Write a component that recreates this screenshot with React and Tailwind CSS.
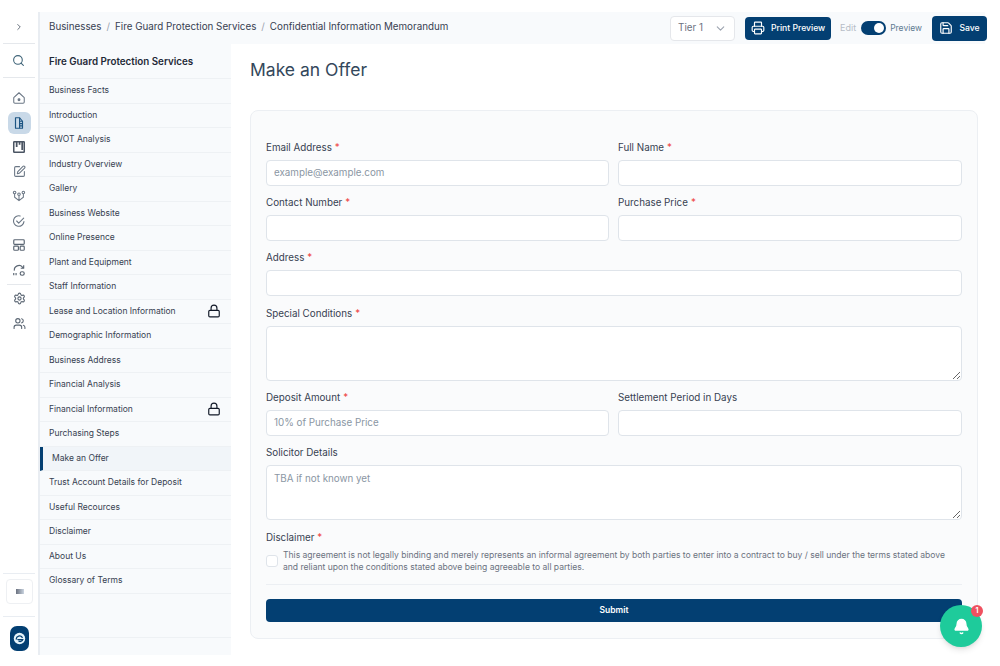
import { Bell, ChevronDown, ChevronRight, Lock, Printer, Save, Search, Settings, SquarePen, Users } from 'lucide-react';

const menuItems = [
    { name: 'Business Facts' },
    { name: 'Introduction' },
    { name: 'SWOT Analysis' },
    { name: 'Industry Overview' },
    { name: 'Gallery' },
    { name: 'Business Website' },
    { name: 'Online Presence' },
    { name: 'Plant and Equipment' },
    { name: 'Staff Information' },
    { name: 'Lease and Location Information', locked: true },
    { name: 'Demographic Information' },
    { name: 'Business Address' },
    { name: 'Financial Analysis' },
    { name: 'Financial Information', locked: true },
    { name: 'Purchasing Steps' },
    { name: 'Make an Offer', active: true },
    { name: 'Trust Account Details for Deposit' },
    { name: 'Useful Recources' },
    { name: 'Disclaimer' },
    { name: 'About Us' },
    { name: 'Glossary of Terms' },
];

function HomeIcon() {
    return (
        <svg className="w-[14px] h-[14px]" viewBox="0 0 24 24" fill="none" stroke="#6b7785" strokeWidth="1.8">
            <path d="M3 11.5 12 3l9 8.5V19a2 2 0 0 1-2 2H5a2 2 0 0 1-2-2z" strokeLinejoin="round" />
            <circle cx="12" cy="15" r="1.6" fill="#6b7785" />
        </svg>
    );
}

function DocIcon() {
    return (
        <svg className="w-[14px] h-[14px]" viewBox="0 0 24 24" fill="none" stroke="#1d5583" strokeWidth="2">
            <path d="M6 3h7l5 6v12H6z" strokeLinejoin="round" />
            <path d="M13 9h5M13 13h5M13 17h5M13 3v18" />
        </svg>
    );
}

function BoardIcon() {
    return (
        <svg className="w-[14px] h-[14px]" viewBox="0 0 24 24" fill="none" stroke="#4b5563" strokeWidth="2.6">
            <rect x="3" y="3" width="18" height="18" rx="1" />
            <path d="M8 3v9M13 3v5M17.5 3v14" strokeWidth="3" />
        </svg>
    );
}

function NetworkIcon() {
    return (
        <svg className="w-[14px] h-[14px]" viewBox="0 0 24 24" fill="none" stroke="#6b7785" strokeWidth="1.8">
            <circle cx="4.5" cy="6" r="2.2" />
            <circle cx="12" cy="9" r="2.2" />
            <circle cx="19.5" cy="6" r="2.2" />
            <path d="M4.5 8.5V14l7.5 6 7.5-6V8.5M12 11.5V20" />
        </svg>
    );
}

function CheckArcIcon() {
    return (
        <svg className="w-[14px] h-[14px]" viewBox="0 0 24 24" fill="none" stroke="#6b7785" strokeWidth="1.9" strokeLinecap="round" strokeLinejoin="round">
            <path d="M20.5 13A9 9 0 1 1 14 3.4" />
            <path d="m8 12 3.5 3.5L20 7" />
        </svg>
    );
}

function LayoutIcon() {
    return (
        <svg className="w-[14px] h-[14px]" viewBox="0 0 24 24" fill="none" stroke="#5b6673" strokeWidth="2">
            <rect x="3" y="3" width="18" height="8" rx="1.5" />
            <rect x="3" y="14" width="8" height="7" rx="1.5" />
            <rect x="14" y="14" width="7" height="7" rx="1.5" />
        </svg>
    );
}

function SyncIcon() {
    return (
        <svg className="w-[14px] h-[14px]" viewBox="0 0 24 24" fill="none" stroke="#5b6673" strokeWidth="2">
            <path d="M4 13a8 8 0 0 1 14-6l2 2M20 4v5h-5" strokeLinejoin="round" />
            <rect x="14" y="15" width="7" height="6" rx="3" />
            <path d="M3 17v4M7 17v4" />
        </svg>
    );
}

function LogoMark() {
    return (
        <svg className="w-[13px] h-[13px]" viewBox="0 0 24 24" fill="none">
            <circle cx="12" cy="12" r="10.5" fill="#e5f4fb" />
            <path d="M6 13a6 6 0 0 1 11-3" stroke="#033f72" strokeWidth="2.4" strokeLinecap="round" />
            <path d="M9 14h9a5 5 0 0 1-7 3" stroke="#033f72" strokeWidth="2.4" strokeLinecap="round" />
        </svg>
    );
}

function RailIcon({ children, active }) {
    return (
        <div className={`w-[23px] h-[22px] flex items-center justify-center rounded-md ${active ? 'bg-[#c9d9e8]' : ''}`}>
            {children}
        </div>
    );
}

function Rail() {
    return (
        <aside className="w-[40px] shrink-0 border-r-2 border-[#e9edf2] flex flex-col items-center">
            <div className="w-[32px] h-[32px] shrink-0 flex items-center justify-center border-b border-[#e5e8ec] text-[#4b5563] ml-[-1px]">
                <ChevronRight size={10} className="mb-[2px]" />
            </div>
            <div className="w-[32px] h-[34px] shrink-0 flex items-center justify-center border-b border-[#e5e8ec] ml-[-1px]">
                <Search size={13} className="text-[#3f6478]" />
            </div>
            <div className="flex flex-col items-center gap-[2.5px] pt-[9px]">
                <RailIcon><HomeIcon /></RailIcon>
                <RailIcon active><DocIcon /></RailIcon>
                <RailIcon><BoardIcon /></RailIcon>
                <RailIcon><SquarePen size={13} className="text-[#6b7785]" /></RailIcon>
                <RailIcon><NetworkIcon /></RailIcon>
                <RailIcon><CheckArcIcon /></RailIcon>
                <RailIcon><LayoutIcon /></RailIcon>
                <RailIcon><SyncIcon /></RailIcon>
            </div>
            <div className="w-[24px] h-px bg-[#e5e8ec] mt-[3px] mb-[3px]" />
            <div className="flex flex-col items-center gap-[2.5px]">
                <RailIcon><Settings size={13} className="text-[#5b6673]" /></RailIcon>
                <RailIcon><Users size={13} className="text-[#5b6673]" /></RailIcon>
            </div>
            <div className="mt-auto w-full flex flex-col items-center">
                <div className="w-[32px] h-px bg-[#e9edf2]" />
                <div className="w-[27px] h-[25px] mt-[5px] mb-[12px] ml-[1px] border border-[#eef0f3] rounded flex items-center justify-center">
                    <div className="w-[8px] h-[5px] bg-gradient-to-r from-[#6b7280] to-[#cbd5e1]" />
                </div>
                <div className="w-[32px] h-px bg-[#e9edf2]" />
                <div className="w-[19px] h-[25px] mt-[9px] mb-[4px] ml-[1px] rounded-[7px] bg-[#033f72] flex items-center justify-center">
                    <LogoMark />
                </div>
            </div>
        </aside>
    );
}

function TopBar() {
    return (
        <header className="h-[32px] shrink-0 mr-[15px] bg-[#f8fafc] flex items-center pl-[9px] text-[#374151]">
            <nav className="flex items-center gap-[5px] text-[9.8px] flex-1 mb-[1px]">
                <span>Businesses</span>
                <span className="text-[#9ca3af]">/</span>
                <span>Fire Guard Protection Services</span>
                <span className="text-[#9ca3af]">/</span>
                <span>Confidential Information Memorandum</span>
            </nav>
            <div className="w-[65px] h-[25px] bg-white border border-[#e5e7eb] rounded flex items-center justify-between px-[7px] text-[9.8px] text-[#6b7280]">
                Tier 1
                <ChevronDown size={13} className="text-[#9ca3af]" />
            </div>
            <button className="ml-[10px] w-[86px] h-[23px] rounded bg-[#033f72] text-white flex items-center justify-center gap-[6px] text-[8.6px] font-medium">
                <Printer size={14} />
                Print Preview
            </button>
            <span className="ml-[9px] text-[9px] text-[#b6bdc7]">Edit</span>
            <div className="ml-[5px] w-[25px] h-[14px] rounded-full bg-[#033f72] flex items-center justify-end pr-[2px]">
                <div className="w-[10px] h-[10px] rounded-full bg-white" />
            </div>
            <span className="ml-[4px] text-[8.5px] text-[#5f7a92]">Preview</span>
            <button className="ml-[10px] mr-[-2px] w-[55px] h-[25px] shrink-0 rounded bg-[#033f72] text-white flex items-center justify-center gap-[6px] text-[8.6px] font-medium">
                <Save size={14} />
                Save
            </button>
        </header>
    );
}

function SideMenu() {
    return (
        <aside className="w-[191px] shrink-0 bg-[#f8fafc] flex flex-col">
            <div className="h-[35px] shrink-0 flex items-center pl-[9px] pt-[2px] border-b border-[#eef1f4] text-[9.8px] font-semibold text-[#1f2937]">
                Fire Guard Protection Services
            </div>
            {menuItems.map((item) => (
                <div
                    key={item.name}
                    className={`h-[24.5px] shrink-0 flex items-center justify-between border-b border-[#eef1f4] text-[8.5px] text-[#374151] pr-[10px] ${item.active ? 'bg-[#f1f5f9] border-l-[3px] border-l-[#033f72] pl-[9px]' : 'pl-[9px]'}`}
                >
                    {item.name}
                    {item.locked && <Lock size={14} className="text-[#111827]" />}
                </div>
            ))}
            <div className="flex-1 border-b border-[#eef1f4] mb-[17px]" />
        </aside>
    );
}

function Field({ label, required, placeholder, textarea, className = '' }) {
    return (
        <div className={`flex flex-col ${className}`}>
            <label className="h-[13px] mb-[5.5px] flex items-center text-[9.8px] leading-none text-[#374151]">
                {label}
                {required && <span className="text-[#ef4444] ml-[3px]">*</span>}
            </label>
            {textarea ? (
                <textarea
                    placeholder={placeholder}
                    className="block h-[55px] w-full bg-white border border-[#dfe4ea] rounded px-[7px] py-[6px] text-[9.8px] leading-[14px] placeholder:text-[#8a96a3] outline-none"
                />
            ) : (
                <input
                    placeholder={placeholder}
                    className="block h-[26px] w-full bg-white border border-[#dfe4ea] rounded px-[7px] text-[9.8px] placeholder:text-[#8a96a3] outline-none"
                />
            )}
        </div>
    );
}

function OfferForm() {
    return (
        <form className="bg-[#fafbfc] border border-[#eceff3] rounded-lg px-[15px] pt-[30.3px] pb-[16px] mt-[28px] mr-[7px]">
            <div className="grid grid-cols-[343px_1fr] gap-x-[9px] gap-y-[10.8px]">
                <Field label="Email Address" required placeholder="example@example.com" />
                <Field label="Full Name" required />
                <Field label="Contact Number" required />
                <Field label="Purchase Price" required />
                <Field label="Address" required className="col-span-2" />
                <Field label="Special Conditions" required textarea className="col-span-2" />
                <Field label="Deposit Amount" required placeholder="10% of Purchase Price" />
                <Field label="Settlement Period in Days" />
                <Field label="Solicitor Details" placeholder="TBA if not known yet" textarea className="col-span-2" />
            </div>
            <div className="mt-[11px] text-[9.8px] leading-[13px] text-[#374151]">
                Disclaimer <span className="text-[#ef4444]">*</span>
            </div>
            <div className="flex items-center gap-[5px] mt-[5px] pb-[11px] border-b border-[#eceff3]">
                <div className="w-[12px] h-[12px] shrink-0 bg-white border border-[#dfe4ea] rounded-[3px]" />
                <p className="text-[8.55px] leading-[12px] text-[#6b7280] pr-[14px]">
                    This agreement is not legally binding and merely represents an informal agreement by both parties to enter into a contract to buy / sell under the terms stated above and reliant upon the conditions stated above being agreeable to all parties.
                </p>
            </div>
            <button type="button" className="block w-full h-[23px] mt-[14px] rounded bg-[#033f72] text-white text-[8.5px] font-semibold">
                Submit
            </button>
        </form>
    );
}

export default function App() {
    return (
        <div className="relative h-[666px] w-[1000px] overflow-hidden bg-white pt-[12px] pb-[11px] flex font-['Inter',sans-serif]">
            <Rail />
            <div className="flex-1 min-w-0 flex flex-col">
                <TopBar />
                <div className="flex-1 min-h-0 flex">
                    <SideMenu />
                    <main className="flex-1 min-w-0 pl-[19px] pr-[15px]">
                        <h1 className="mt-[14px] text-[17.5px] leading-[24px] text-[#33475b]">Make an Offer</h1>
                        <OfferForm />
                    </main>
                </div>
            </div>

            {/* Notification bubble */}
            <div className="absolute left-[940px] bottom-[19px] w-[42px] h-[42px] rounded-full bg-[#1ecb9b] shadow-md flex items-center justify-center">
                <Bell size={17} className="text-white" fill="white" />
                <span className="absolute top-0 right-[-1px] w-[12px] h-[12px] rounded-full bg-[#ef5160] text-white text-[7px] font-bold flex items-center justify-center">1</span>
            </div>
        </div>
    );
}
